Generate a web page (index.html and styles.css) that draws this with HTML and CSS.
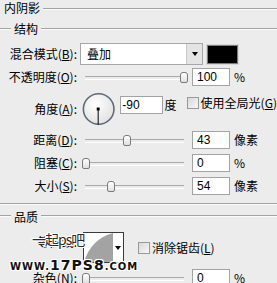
FILE: index.html
```html
<!DOCTYPE html>
<html lang="zh-CN">
<head>
<meta charset="utf-8">
<link rel="stylesheet" href="styles.css">
</head>
<body>
<div class="dlg">
  <div class="title"><span>内阴影</span><i class="rule"></i></div>
  <div class="ghead g1"><i class="rule stub"></i><span>结构</span><i class="rule"></i></div>

  <div class="row r-blend">
    <span class="lbl">混合模式(<u>B</u>):</span>
    <div class="select"><span class="sel-text">叠加</span><b class="sel-btn"><i class="arrow"></i></b></div>
    <div class="swatch"></div>
  </div>

  <div class="row r-op">
    <span class="lbl">不透明度(<u>O</u>):</span>
    <div class="slider"><i class="thumb" style="left:95px"></i></div>
    <div class="num">100</div><span class="unit">%</span>
  </div>

  <div class="row r-angle">
    <span class="lbl">角度(<u>A</u>):</span>
    <svg class="dial" width="34" height="34" viewBox="0 0 34 34">
      <defs>
        <radialGradient id="dg" cx="40%" cy="35%" r="75%">
          <stop offset="0" stop-color="#ffffff"/>
          <stop offset="1" stop-color="#dedede"/>
        </radialGradient>
      </defs>
      <circle cx="17" cy="17" r="15.6" fill="url(#dg)" stroke="#5e6a78" stroke-width="1.6"/>
      <line x1="16.5" y1="17" x2="16.5" y2="33" stroke="#000" stroke-width="1"/>
      <rect x="15" y="15.5" width="3" height="3" fill="#000"/>
    </svg>
    <div class="num wide">-90</div><span class="unit">度</span>
    <span class="chk"></span><span class="chk-lbl">使用全局光(<u>G</u>)</span>
  </div>

  <div class="row r-dist">
    <span class="lbl">距离(<u>D</u>):</span>
    <div class="slider"><i class="thumb" style="left:38px"></i></div>
    <div class="num">43</div><span class="unit">像素</span>
  </div>

  <div class="row r-choke">
    <span class="lbl">阻塞(<u>C</u>):</span>
    <div class="slider"><i class="thumb" style="left:-3px"></i></div>
    <div class="num">0</div><span class="unit">%</span>
  </div>

  <div class="row r-size">
    <span class="lbl">大小(<u>S</u>):</span>
    <div class="slider"><i class="thumb" style="left:22px"></i></div>
    <div class="num">54</div><span class="unit">像素</span>
  </div>

  <i class="rule sep"></i>

  <div class="ghead g2"><i class="rule stub"></i><span>品质</span><i class="rule"></i></div>

  <div class="row r-contour">
    <span class="lbl top">等高线:</span>
    <div class="contour">
      <svg width="29" height="29" viewBox="0 0 29 29">
        <rect width="29" height="29" fill="#fff"/>
        <path d="M0 29 Q7 6 29 0 L29 29 Z" fill="#a3a3a3"/>
      </svg>
      <b class="c-btn"><i class="arrow"></i></b>
    </div>
    <span class="chk"></span><span class="chk-lbl">消除锯齿(<u>L</u>)</span>
  </div>

  <div class="row r-noise">
    <span class="lbl">杂色(<u>N</u>):</span>
    <div class="slider"><i class="thumb" style="left:-3px"></i></div>
    <div class="num">0</div><span class="unit">%</span>
  </div>

  <div class="wm">
    <span class="wm1">一起ps吧</span>
    <span class="wm2">www.<b>17PS8</b>.com</span>
  </div>
</div>
</body>
</html>
```

FILE: styles.css
```css
* { box-sizing: border-box; margin: 0; padding: 0; }
html, body { width: 277px; height: 283px; overflow: hidden; }
body {
  background: #ececec;
  font: 12px/16px "Noto Sans CJK SC", "Liberation Sans", sans-serif;
  color: #000;
}
.dlg { position: relative; width: 277px; height: 283px; }
u { text-decoration: underline; text-underline-offset: 1px; }

.rule {
  display: block;
  flex: 1;
  height: 2px;
  border-top: 1px solid #a3a3a3;
  border-bottom: 1px solid #fbfbfb;
}

.title { display: flex; align-items: center; height: 16px; padding-left: 4px; gap: 3px; }
.title .rule { margin-top: 1px; }

.ghead { display: flex; align-items: center; height: 16px; gap: 3px; }
.ghead .stub { flex: 0 0 11px; }
.g1 { margin-top: 5px; }
.g2 { margin-top: 4px; }
.g2 .rule { margin-top: -3px; }

.row { display: flex; align-items: center; }
.lbl { flex: 0 0 78px; text-align: right; padding-right: 1px; white-space: nowrap; }
.lbl.top { align-self: flex-start; margin-top: 2px; }

/* blend */
.r-blend { margin-top: 6px; height: 22px; }
.select {
  margin-left: 2px; width: 123px; height: 22px;
  display: flex; background: #fff; border: 1px solid #a7a7a7;
}
.sel-text { flex: 1; padding-left: 6px; line-height: 20px; }
.sel-btn {
  flex: 0 0 16px; background: #e4e4e4; border-left: 1px solid #c8c8c8;
  display: flex; align-items: center; justify-content: center;
}
.arrow {
  width: 0; height: 0;
  border-left: 3px solid transparent; border-right: 3px solid transparent;
  border-top: 4px solid #000;
}
.swatch {
  margin-left: 4px; width: 31px; height: 19px;
  background: #000; border: 1px solid #7d7d7d; outline: 1px solid #d8d8d8;
}

/* sliders */
.slider { position: relative; width: 99px; height: 18px; margin-left: 7px; }
.slider::before {
  content: ""; position: absolute; left: 0; right: 0; top: 8px; height: 2px;
  border-top: 1px solid #a9a9a9; border-bottom: 1px solid #fff;
}
.thumb {
  position: absolute; top: 4px; width: 8px; height: 11px;
  background: linear-gradient(#ffffff, #e0e0e0);
  border: 1px solid #7b7b7b; border-radius: 3px 3px 2px 2px;
}

.num {
  margin-left: 8px; width: 38px; height: 18px;
  background: #fff; border: 1px solid #a3a3a3;
  font-family: "Liberation Sans", sans-serif; font-size: 12px; line-height: 16px;
  padding-left: 4px;
}
.num.wide { margin-left: 5px; width: 43px; padding-left: 1px; }
.unit { margin-left: 4px; }

.r-op { margin-top: 3px; height: 18px; }

.r-angle { margin-top: 5px; height: 35px; }
.dial { margin-left: 4px; display: block; }
.r-angle .num { align-self: flex-start; margin-top: 5px; }
.r-angle .unit { align-self: flex-start; margin-top: 6px; margin-left: 2px; }
.chk {
  flex: 0 0 12px; height: 12px; margin-left: 10px;
  border: 1px solid #9a9a9a;
  background: linear-gradient(135deg, #d8d8d8, #f8f8f8);
}
.r-angle .chk { align-self: flex-start; margin-top: 6px; }
.r-angle .chk-lbl { align-self: flex-start; margin-top: 4px; }
.chk-lbl { margin-left: 2px; white-space: nowrap; }

.r-dist { margin-top: 5px; height: 18px; }
.r-choke { margin-top: 5px; height: 18px; }
.r-size { margin-top: 5px; height: 18px; }

.sep { flex: none; width: 277px; margin-top: 8px; }

.r-contour { margin-top: 7px; height: 31px; }
.contour {
  margin-left: 5px; width: 41px; height: 31px;
  display: flex; border: 1px solid #3a3a3a; background: #fff;
}
.contour svg { display: block; }
.c-btn { flex: 1; display: flex; align-items: center; justify-content: center; background: #fff; }
.r-contour .chk { margin-left: 14px; }

.r-noise { margin-top: 6px; height: 18px; }

/* watermark overlay */
.wm { position: absolute; left: 10px; top: 229px; width: 110px; }
.wm1 {
  position: absolute; left: 22px; top: 0;
  font-size: 14px; line-height: 20px; color: #2a2a2a; letter-spacing: -1px;
  white-space: nowrap;
  text-shadow: 1px 0 #fff, -1px 0 #fff, 0 1px #fff, 0 -1px #fff, 1px 1px #fff, -1px -1px #fff, 1px -1px #fff, -1px 1px #fff;
}
.wm2 {
  position: absolute; left: 0; top: 30px; white-space: nowrap;
  font-family: "DejaVu Sans", sans-serif; font-weight: bold; font-size: 10px; line-height: 12px;
  color: #111; text-transform: uppercase; letter-spacing: 1px;
  text-shadow: 1px 0 #fff, -1px 0 #fff, 0 1px #fff, 0 -1px #fff, 1px 1px #fff, -1px -1px #fff, 1px -1px #fff, -1px 1px #fff;
}
.wm2 b { font-size: 14px; letter-spacing: 1px; }
```
